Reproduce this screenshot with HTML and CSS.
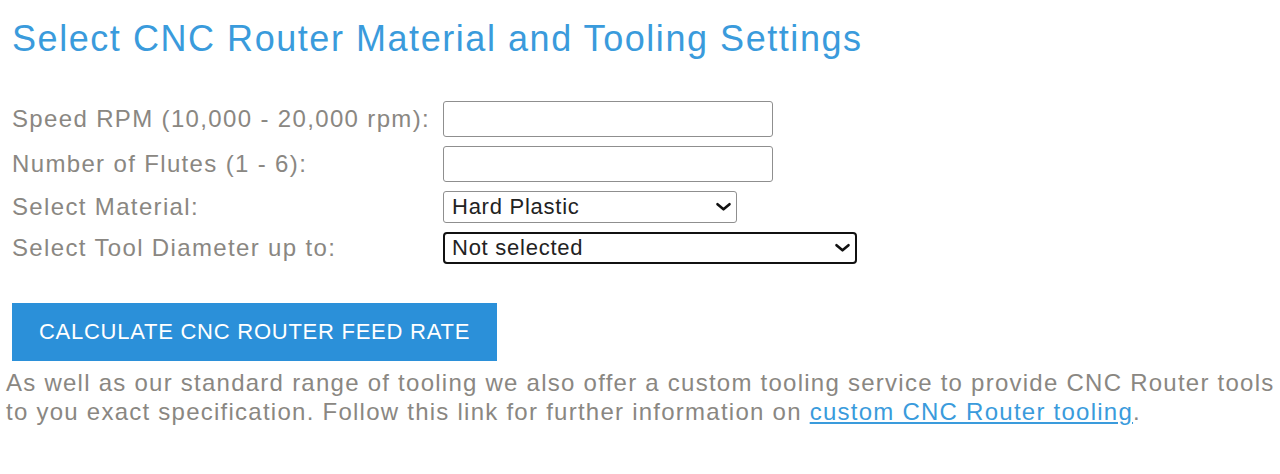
FILE: index.html
```html
<!DOCTYPE html>
<html>
<head>
<meta charset="utf-8">
<link rel="stylesheet" href="styles.css">
</head>
<body>
<div class="page">
  <h1 class="title">Select CNC Router Material and Tooling Settings</h1>
  <form class="form">
    <div class="grid">
      <label class="label">Speed RPM (10,000 - 20,000 rpm):</label>
      <div class="field"><input class="text-input" type="text"></div>
      <label class="label">Number of Flutes (1 - 6):</label>
      <div class="field"><input class="text-input" type="text"></div>
      <label class="label">Select Material:</label>
      <div class="field">
        <div class="select select-material"><span>Hard Plastic</span><svg class="chev" viewBox="0 0 17 10" width="17" height="10"><path d="M2.5 2.2 L8.5 7.3 L14.5 2.2" fill="none" stroke="#111" stroke-width="2.6" stroke-linecap="round" stroke-linejoin="round"/></svg></div>
      </div>
      <label class="label">Select Tool Diameter up to:</label>
      <div class="field">
        <div class="select select-diameter"><span>Not selected</span><svg class="chev" viewBox="0 0 17 10" width="17" height="10"><path d="M2.5 2.2 L8.5 7.3 L14.5 2.2" fill="none" stroke="#111" stroke-width="2.6" stroke-linecap="round" stroke-linejoin="round"/></svg></div>
      </div>
    </div>
    <button class="calc-btn" type="button">CALCULATE CNC ROUTER FEED RATE</button>
  </form>
  <p class="note">As well as our standard range of tooling we also offer a custom tooling service to provide CNC Router tools to you exact specification. Follow this link for further information on <a href="#" class="link">custom CNC Router tooling</a>.</p>
</div>
</body>
</html>
```
FILE: styles.css
```css
html, body {
  margin: 0;
  padding: 0;
  background: #fff;
}
body {
  font-family: "Liberation Sans", Arial, sans-serif;
}
.page {
  padding: 0 0 0 6px;
}
.title {
  margin: 0;
  padding: 18px 0 0 6px;
  font-size: 36px;
  font-weight: normal;
  color: #3a9bdc;
  line-height: 42px;
  letter-spacing: 1.55px;
}
.form {
  margin: 0;
  padding: 0 0 0 6px;
}
.grid {
  display: grid;
  grid-template-columns: 431px auto;
  row-gap: 9px;
  margin-top: 41px;
  align-items: center;
}
.label {
  font-size: 24px;
  line-height: 28px;
  color: #8a8782;
  letter-spacing: 1.35px;
}
.field {
  display: flex;
}
.text-input {
  box-sizing: border-box;
  width: 330px;
  height: 36px;
  border: 1px solid #8f8f8f;
  border-radius: 3px;
  margin: 0;
  padding: 0;
}
.select {
  box-sizing: border-box;
  height: 32px;
  border: 1px solid #8f8f8f;
  border-radius: 3px;
  display: flex;
  align-items: center;
  justify-content: space-between;
  padding: 0 4px 0 8px;
  font-size: 22px;
  letter-spacing: 0.75px;
  color: #222;
}
.chev {
  width: 17px;
  height: 10px;
  flex: none;
}
.select-material {
  width: 294px;
}
.select-diameter {
  width: 414px;
  border: 2px solid #111;
  border-radius: 4px;
  padding-left: 7px;
  padding-right: 4px;
}
.calc-btn {
  margin-top: 39px;
  width: 485px;
  height: 58px;
  border: none;
  background: #2b90d9;
  color: #fff;
  font-family: "Liberation Sans", Arial, sans-serif;
  font-size: 22px;
  letter-spacing: 0.75px;
  padding: 0;
  display: block;
}
.note {
  margin: 7px 0 0 0;
  font-size: 24px;
  line-height: 29px;
  color: #8a8782;
  letter-spacing: 1.25px;
}
.link {
  color: #3a9bdc;
}
```
